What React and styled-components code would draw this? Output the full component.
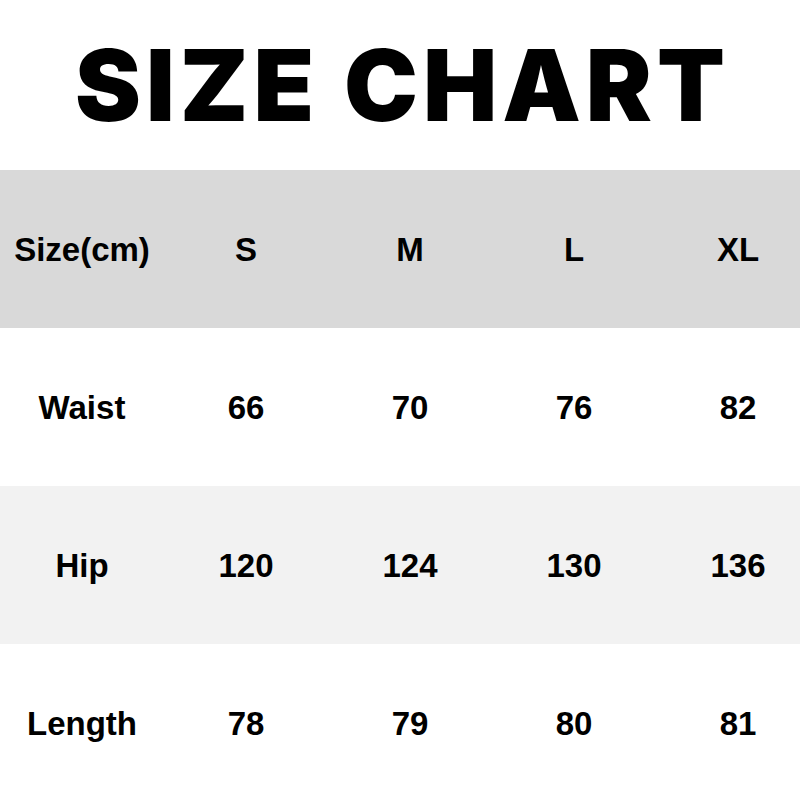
import React from "react"
import styled, { createGlobalStyle } from "styled-components"

const GlobalStyle = createGlobalStyle`
  html, body {
    margin: 0;
    padding: 0;
    background: #ffffff;
    overflow: hidden;
  }
`

const Page = styled.div`
  width: 800px;
  height: 800px;
  overflow: hidden;
  display: flex;
  flex-direction: column;
  background: #ffffff;
`

const Title = styled.h1`
  margin: 0;
  height: 170px;
  flex-shrink: 0;
  padding-left: 5px;
  display: flex;
  align-items: center;
  justify-content: center;
  font-family: Inter, "Liberation Sans", sans-serif;
  font-weight: 900;
  font-size: 99px;
  line-height: 1;
  letter-spacing: 5px;
  color: #000000;
`

const Row = styled.div`
  height: 158px;
  flex-shrink: 0;
  display: grid;
  grid-template-columns: repeat(5, 164px);
  align-items: center;
  background: ${(p) => p.$bg || "#ffffff"};
`

const Cell = styled.div`
  padding-top: 2px;
  text-align: center;
  white-space: nowrap;
  font-family: "Liberation Sans", Arial, sans-serif;
  font-weight: 700;
  font-size: 33px;
  color: #000000;
`

const rows = [
  { bg: "#d9d9d9", cells: ["Size(cm)", "S", "M", "L", "XL"] },
  { bg: "#ffffff", cells: ["Waist", "66", "70", "76", "82"] },
  { bg: "#f2f2f2", cells: ["Hip", "120", "124", "130", "136"] },
  { bg: "#ffffff", cells: ["Length", "78", "79", "80", "81"] },
]

export default function App() {
  return (
    <>
      <GlobalStyle />
      <Page>
        <Title>SIZE CHART</Title>
        {rows.map((row, i) => (
          <Row key={i} $bg={row.bg}>
            {row.cells.map((c, j) => (
              <Cell key={j}>{c}</Cell>
            ))}
          </Row>
        ))}
      </Page>
    </>
  )
}
